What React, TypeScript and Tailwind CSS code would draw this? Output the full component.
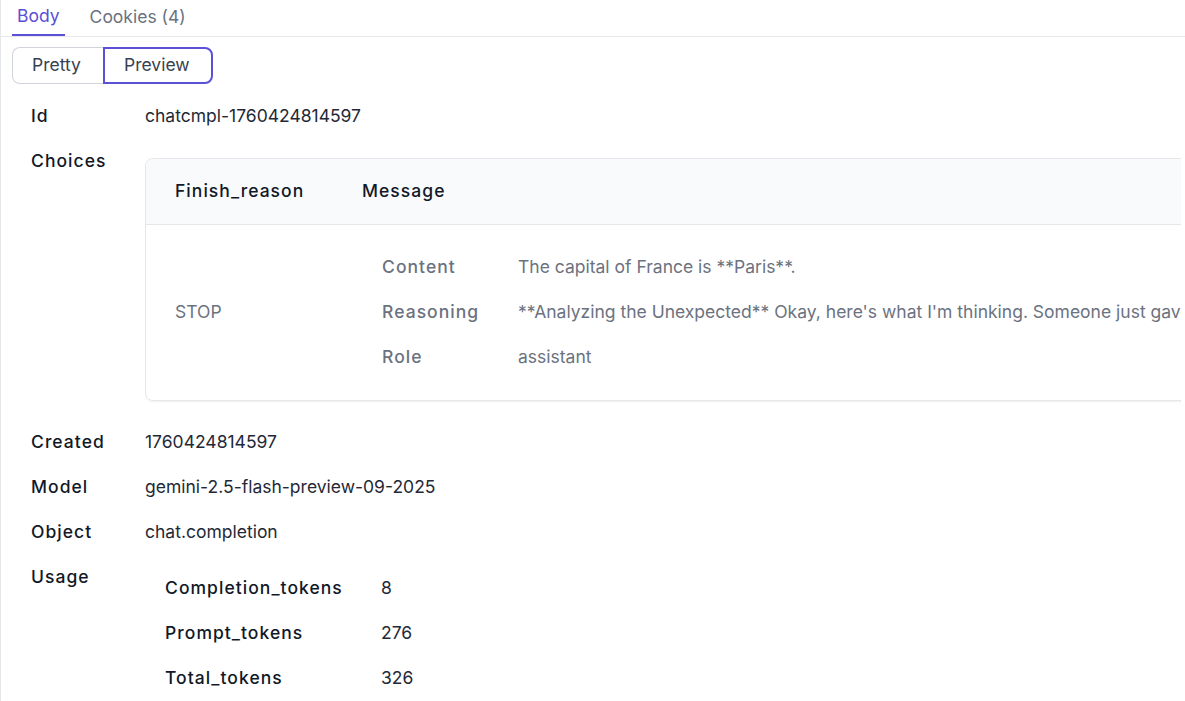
import React from "react";

const font = { fontFamily: "Inter, 'Noto Sans', sans-serif" };

function Row({ label, children, top }: { label: string; children: React.ReactNode; top?: boolean }) {
  return (
    <div className="flex">
      <div className="w-[114px] shrink-0 h-[45px] flex items-center text-[17.5px] font-medium tracking-[0.06em] text-[#111827]">
        {label}
      </div>
      <div className={"flex-1 min-w-0 " + (top ? "" : "h-[45px] flex items-center")}>{children}</div>
    </div>
  );
}

export default function App() {
  return (
    <div style={font} className="w-[1185px] h-[701px] overflow-hidden bg-white border-l border-[#e5e7eb] text-[17.5px] text-[#1f2937]">
      <div className="flex h-[37px] border-b border-[#e5e7eb] pl-[11px] gap-[20px]">
        <div className="px-[5px] h-[36px] flex items-center border-b-2 border-[#5b50d6] text-[#5b50d6] mb-[-1px] pb-[2px]">Body</div>
        <div className="px-[5px] h-[36px] flex items-center text-[#6b7280] pb-[2px]">Cookies (4)</div>
      </div>
      <div className="pl-[11px] pt-[10px]">
        <div className="flex h-[37px]">
          <div className="h-full pl-[19px] flex items-center border border-r-0 border-[#d1d5db] rounded-l-[8px] text-[#374151] w-[91px]">Pretty</div>
          <div className="h-full pl-[19px] flex items-center border-2 border-[#5b50d6] rounded-r-[8px] text-[#374151] w-[110px]">Preview</div>
        </div>
      </div>
      <div className="pl-[30px] pr-[4px] pt-[10px]">
        <Row label="Id">chatcmpl-1760424814597</Row>
        <Row label="Choices" top>
          <div className="pt-[19px] pb-[19px] overflow-hidden">
            <div className="w-[1200px] border border-[#e5e7eb] rounded-[8px] shadow-[0_1px_2px_rgba(0,0,0,0.06)] overflow-hidden">
              <div className="flex h-[66px] bg-[#f9fafb] border-b border-[#e5e7eb] items-center font-medium tracking-[0.06em] text-[#111827]">
                <div className="w-[187px] pl-[29px]">Finish_reason</div>
                <div className="pl-[29px]">Message</div>
              </div>
              <div className="flex py-5">
                <div className="w-[187px] pl-[29px] flex items-center text-[#6b7280]">STOP</div>
                <div className="pl-[49px] flex-1">
                  {[
                    ["Content", "The capital of France is **Paris**."],
                    ["Reasoning", "**Analyzing the Unexpected** Okay, here's what I'm thinking. Someone just gave me a question"],
                    ["Role", "assistant"],
                  ].map(([k, v]) => (
                    <div key={k} className="flex h-[45px] items-center whitespace-nowrap">
                      <div className="w-[136px] shrink-0 font-medium tracking-[0.06em] text-[#6b7280]">{k}</div>
                      <div className="text-[#6b7280]">{v}</div>
                    </div>
                  ))}
                </div>
              </div>
            </div>
          </div>
        </Row>
        <Row label="Created">1760424814597</Row>
        <Row label="Model">gemini-2.5-flash-preview-09-2025</Row>
        <Row label="Object">chat.completion</Row>
        <Row label="Usage" top>
          <div className="pt-[11px] pl-[20px]">
            {[
              ["Completion_tokens", "8"],
              ["Prompt_tokens", "276"],
              ["Total_tokens", "326"],
            ].map(([k, v]) => (
              <div key={k} className="flex h-[45px] items-center">
                <div className="w-[216px] shrink-0 font-medium tracking-[0.06em] text-[#111827]">{k}</div>
                <div className="text-[#1f2937]">{v}</div>
              </div>
            ))}
          </div>
        </Row>
      </div>
    </div>
  );
}
